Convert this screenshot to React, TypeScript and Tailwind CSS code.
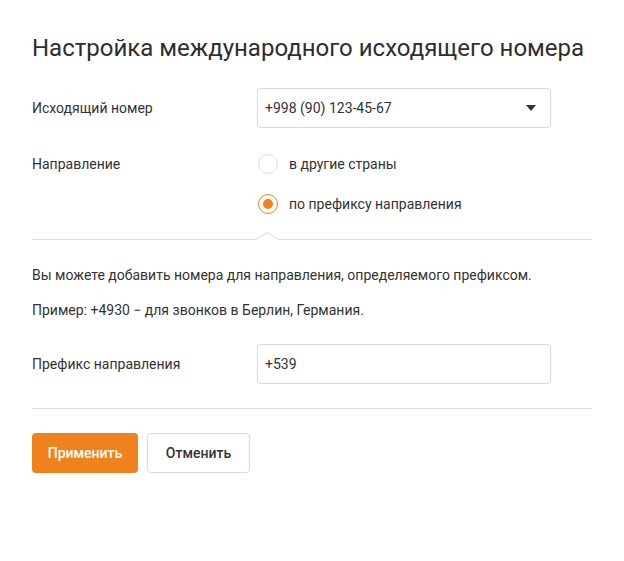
import { useState } from "react";

const orange = "#f0821e";

function Radio({ checked, label, onClick }: { checked: boolean; label: string; onClick: () => void }) {
  return (
    <button type="button" onClick={onClick} className="flex h-10 items-center gap-[11px] text-left">
      <span
        className={`flex h-[20px] w-[20px] items-center justify-center rounded-full border ${
          checked ? "border-[1.5px] border-[#f0821e]" : "border-[#dcdcdc]"
        }`}
      >
        {checked ? <span className="h-[10px] w-[10px] rounded-full bg-[#f0821e]" /> : null}
      </span>
      <span className="text-[14px] text-[#333]">{label}</span>
    </button>
  );
}

export default function App() {
  const [mode, setMode] = useState<"other" | "prefix">("prefix");
  const [prefix, setPrefix] = useState("+539");

  return (
    <main
      className="min-h-[561px] w-full bg-white px-8 pt-8 text-[#333]"
      style={{ fontFamily: "Roboto, 'Noto Sans', sans-serif" }}
    >
      <div className="w-[560px]">
        <h1 className="text-[24px] leading-8 text-[#2e2e2e]">
          Настройка международного исходящего номера
        </h1>

        <div className="mt-6 flex items-center">
          <span className="w-[225px] text-[14px]">Исходящий номер</span>
          <button
            type="button"
            className="flex h-10 w-[294px] items-center justify-between rounded-[4px] border border-[#dadada] pl-[7px] pr-[14px] text-[14px]"
          >
            <span>+998 (90) 123-45-67</span>
            <svg width="10" height="6" viewBox="0 0 10 6">
              <path d="M0 0 H10 L5 6 Z" fill="#333" />
            </svg>
          </button>
        </div>

        <div className="mt-4 flex">
          <span className="flex h-10 w-[225px] items-center text-[14px]">Направление</span>
          <div className="flex flex-col pl-[1px]">
            <Radio checked={mode === "other"} label="в другие страны" onClick={() => setMode("other")} />
            <Radio checked={mode === "prefix"} label="по префиксу направления" onClick={() => setMode("prefix")} />
          </div>
        </div>

        <div className="mt-[8px] flex h-[8px] items-end">
          <div className="h-px w-[224px] bg-[#dcdcdc]" />
          <svg width="22" height="8" viewBox="0 0 22 8" className="block">
            <path d="M0 7.5 L11 0.5 L22 7.5" fill="none" stroke="#dcdcdc" strokeWidth="1" />
          </svg>
          <div className="h-px flex-1 bg-[#dcdcdc]" />
        </div>

        <p className="mt-[25px] text-[14px] leading-5">
          Вы можете добавить номера для направления, определяемого префиксом.
        </p>
        <p className="mt-[15px] text-[14px] leading-5">
          Пример: +4930 − для звонков в Берлин, Германия.
        </p>

        <div className="mt-6 flex items-center">
          <span className="w-[225px] text-[14px]">Префикс направления</span>
          <input
            value={prefix}
            onChange={(event) => setPrefix(event.target.value)}
            className="h-10 w-[294px] rounded-[4px] border border-[#dadada] px-[7px] text-[14px] text-[#333] outline-none"
          />
        </div>

        <div className="mt-6 h-px w-full bg-[#dcdcdc]" />

        <div className="mt-6 flex gap-[9px]">
          <button
            type="button"
            className="h-10 w-[106px] rounded-[4px] text-[14px] font-medium text-white"
            style={{ backgroundColor: orange }}
          >
            Применить
          </button>
          <button
            type="button"
            className="h-10 w-[103px] rounded-[4px] border border-[#dadada] bg-white text-[14px] font-medium text-[#333]"
          >
            Отменить
          </button>
        </div>
      </div>
    </main>
  );
}
